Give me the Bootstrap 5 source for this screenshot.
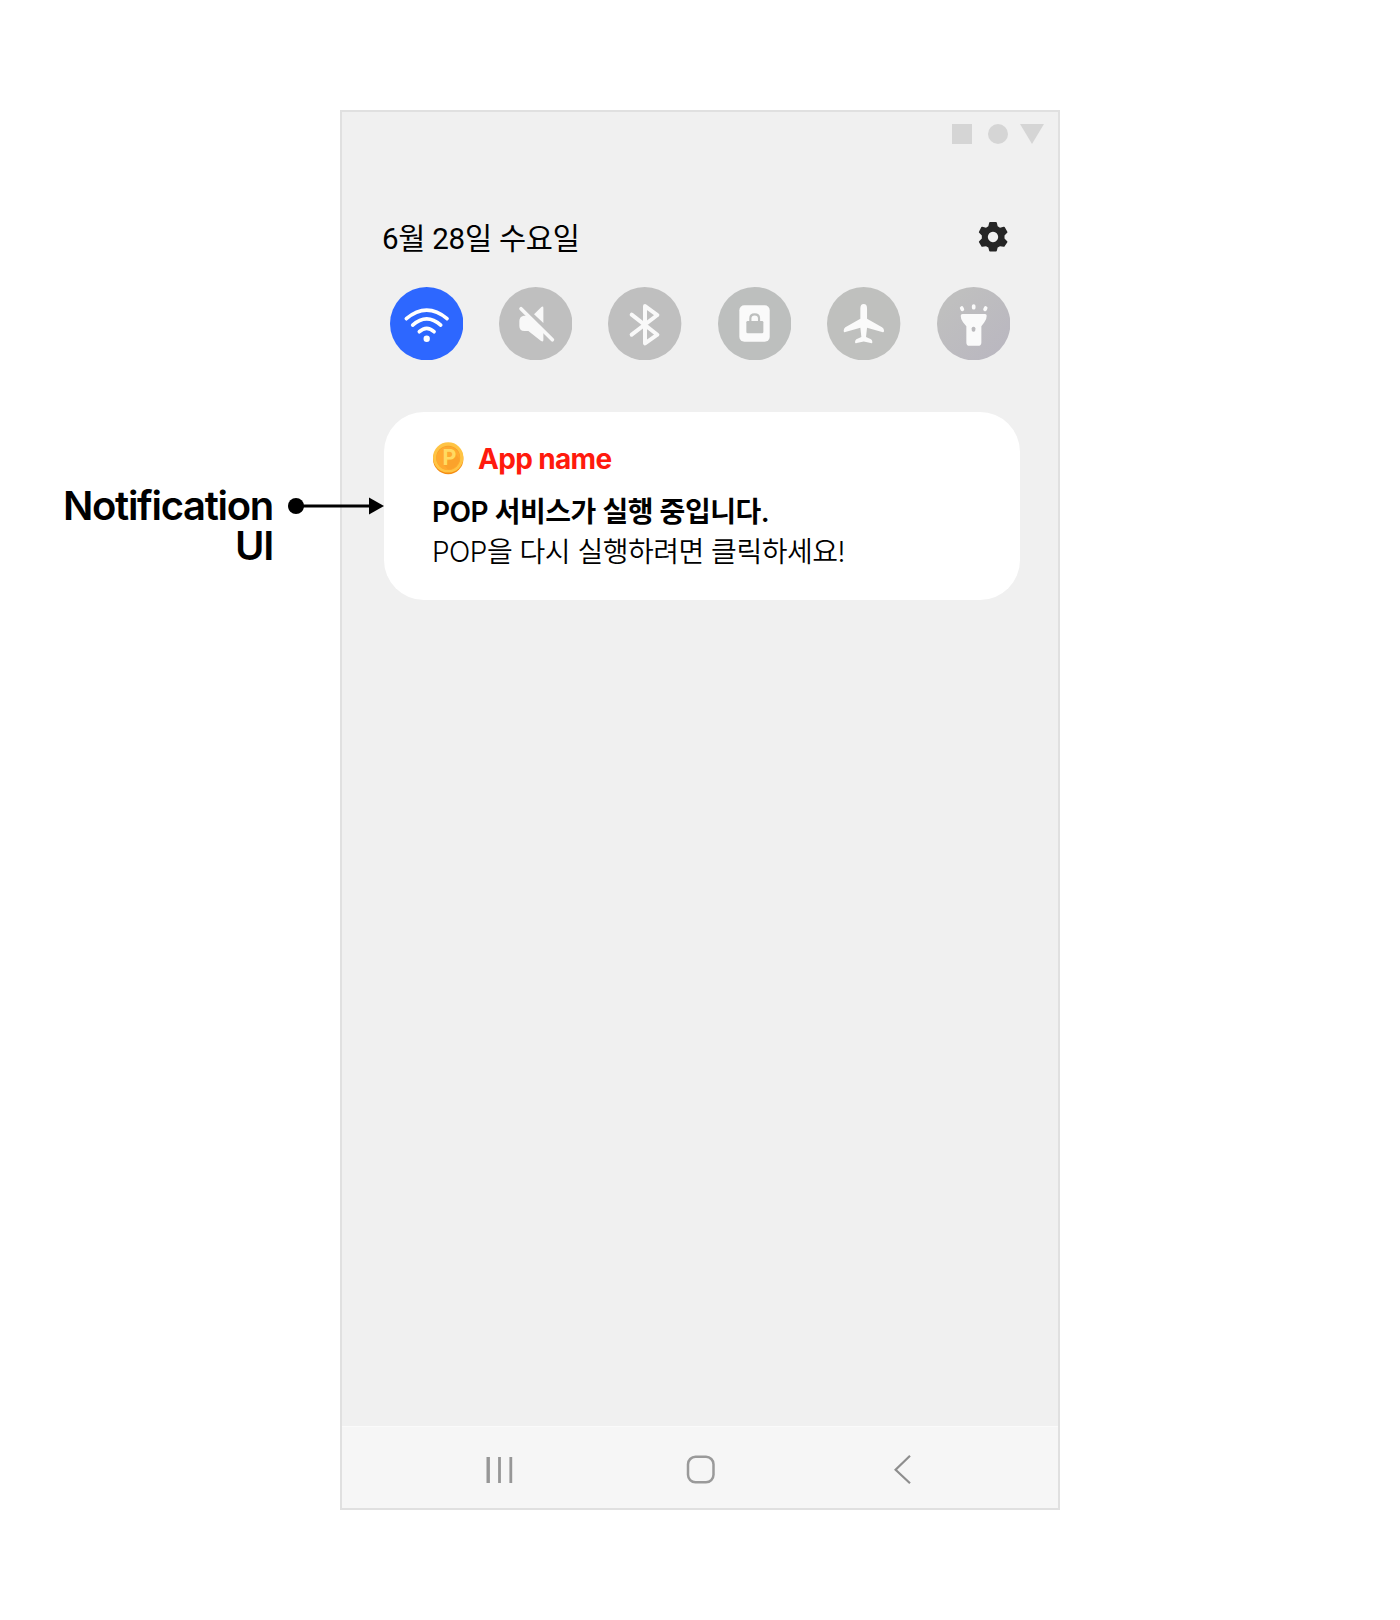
<!DOCTYPE html>
<html lang="ko">
<head>
<meta charset="utf-8">
<meta name="viewport" content="width=device-width, initial-scale=1">
<title>Notification UI</title>
<link href="https://cdn.jsdelivr.net/npm/bootstrap@5.3.0/dist/css/bootstrap.min.css" rel="stylesheet">
<style>
  body { background: #fff; color: #000; font-family: Inter, "Noto Sans CJK KR", sans-serif; }
  svg { display: block; flex: none; }
  .stage { width: 1400px; height: 1620px; padding-top: 110px; }
  .callout { width: 340px; padding: 376px 67px 0 0; }
  .callout-text { font-size: 40px; line-height: 40px; font-weight: 600; letter-spacing: -1.3px; }
  .callout-arrow { left: 288px; top: 496px; z-index: 2; }
  .phone { width: 720px; height: 1400px; background: #f0f0f0; border: 2px solid #e0e0e0; }
  .status-icons { padding: 12px 14px 0 0; height: 32px; }
  .date-row { margin-top: 71px; padding: 0 50px 0 40px; height: 44px; }
  .date-text { font: 400 29.5px/44px Roboto, "Noto Sans CJK KR", sans-serif; letter-spacing: -.25px; white-space: nowrap; padding-top: 3px; }
  .toggles { margin-top: 27.500px; padding: 0 48px 0 47.500px; }
  .notice { margin: 52px 38px 0 42px; height: 188px; border-radius: 40px; padding: 28px 48px 0; }
  .coin { margin-left: 1px; }
  .app-title { font-size: 28px; line-height: 36px; font-weight: 700; color: #ff1a0d; letter-spacing: -.65px; margin-left: 14px; padding-top: 1px; }
  .notice-text { font-size: 28px; line-height: 40px; white-space: nowrap; margin-top: 15px; }
  .line-strong { font-weight: 600; letter-spacing: -.48px; }
  .line-plain { font-weight: 350; letter-spacing: -.5px; }
  .softkeys { height: 82px; background: #f6f6f6; border-top: 1px solid #fafafa; padding: 28px 146px 0 143px; }
</style>
</head>
<body>
<div class="stage d-flex position-relative">
  <div class="callout text-end">
    <div class="callout-text">Notification<br>UI</div>
  </div>
  <svg class="callout-arrow position-absolute" width="96" height="20" viewBox="0 0 96 20">
    <circle cx="8" cy="10" r="8"/><path d="M8 10H84" stroke="#000" stroke-width="3"/><path d="M81 1.5 96 10 81 18.5z"/>
  </svg>

  <main class="phone d-flex flex-column">
    <div class="status-icons d-flex justify-content-end">
      <svg width="92" height="20" viewBox="0 0 92 20" fill="#d5d5d5"><path d="M0 0h20v20H0z"/><circle cx="46" cy="10" r="10"/><path d="M68 0h24L80 20z"/></svg>
    </div>
    <div class="date-row d-flex justify-content-between align-items-center">
      <div class="date-text">6월 28일 수요일</div>
      <svg width="30" height="32" viewBox="144 363 90 96">
        <path fill="#252525" fill-rule="evenodd" d="M180 366h18q2 0 2.500 2l2.500 11 7 4 11-3q2-.5 3 1l8 14q1 2-.5 3.500l-8 8v9l8 8q1.500 1.500.5 3.500l-8 12q-1 2-3 1.500l-11-2-7 4-2.500 10q-.5 2-2.500 2h-18q-2 0-2.500-2l-2.500-10-7-4-11 2q-2 .5-3-1.500l-7-12q-1-2 .5-3.500l8-8v-9l-8-8q-1.500-1.500-.5-3.500l7-14q1-1.500 3-1l11 3 7-4 2.500-11q.5-2 2.500-2zM189 395.500a15.500 15.500 0 1 0 .01 0z"/>
      </svg>
    </div>

    <div class="toggles d-flex justify-content-between">
      <svg width="73.4" height="73.4" viewBox="28 35 220 220">
        <circle cx="138" cy="145" r="110" fill="#2d67ff"/>
        <g fill="none" stroke="#fff" stroke-width="11" stroke-linecap="round"><path d="M77 130q61-51 122 0M96 149q42-37 84 0M116 169q22-20 44 0"/></g><circle cx="138" cy="190" r="9.500" fill="#fff"/>
      </svg>
      <svg width="73.4" height="73.4" viewBox="356 35 220 220">
        <circle cx="466" cy="145" r="110" fill="#bfbfbf"/>
        <g fill="#f8f8f8"><path d="M461 117l22-22q6-4 6 3v45zM430 121q-13 3-13 16v15q0 15 15 15h12l38 30q7 4 7-3v-24l-49-49z"/><path d="M422 100 516 193" fill="none" stroke="#f8f8f8" stroke-width="11" stroke-linecap="round"/></g>
      </svg>
      <svg width="73.4" height="73.4" viewBox="55 35 220 220">
        <circle cx="165" cy="145" r="110" fill="#bfbfbf"/>
        <path d="M126 118l77 60-37 26V92l37 27-77 59" fill="none" stroke="#f9f9f9" stroke-width="12" stroke-linecap="round" stroke-linejoin="round"/>
      </svg>
      <svg width="73.4" height="73.4" viewBox="383 35 220 220">
        <circle cx="493" cy="145" r="110" fill="#bdbfbe"/>
        <rect x="447" y="90" width="91" height="109" rx="15" fill="#fafafa"/><rect x="468" y="137" width="51" height="37" rx="4" fill="#bdbfbe"/><path d="M480 139v-10q0-12 13-12t13 12v10" fill="none" stroke="#bdbfbe" stroke-width="6.500"/>
      </svg>
      <svg width="73.4" height="73.4" viewBox="51 35 220 220">
        <circle cx="161" cy="145" r="110" fill="#bfc0be"/>
        <path fill="#fafafa" d="M161 86q10 0 10 13v31l45 26q6 4 6 10 0 6-6 4l-45-13-3 28 15 7q4 3 4 8 0 5-5 3l-21-5-21 5q-5 2-5-3 0-5 4-8l15-7-3-28-45 13q-5 2-5-4 0-6 5-10l45-26V99q0-13 10-13z"/>
      </svg>
      <svg width="73.4" height="73.4" viewBox="380 35 220 220">
        <defs><linearGradient id="torch" x1="0" y1="0" x2="1" y2="1"><stop offset=".2" stop-color="#bfbfbf"/><stop offset="1" stop-color="#b9b6c0"/></linearGradient></defs>
        <circle cx="490" cy="145" r="110" fill="url(#torch)"/>
        <path fill="#fafafa" d="M457 116h67q5 0 5 5 0 11-7 20l-9 12v48q0 10-10 10h-26q-9 0-9-10v-48l-10-12q-7-9-7-20 0-5 6-5z"/><rect x="484" y="154" width="11" height="15" rx="5" fill="#bbbabd"/>
        <path d="M454 98l2 4M490 92v5M526 98l-2 4" stroke="#fafafa" stroke-width="11" stroke-linecap="round"/>
      </svg>
    </div>

    <section class="notice bg-white">
      <div class="d-flex align-items-center">
        <svg class="coin" width="31" height="33" viewBox="0 0 31 33">
          <circle cx="15.200" cy="17" r="15.200" fill="#f58d12"/><circle cx="15.200" cy="15.400" r="15.200" fill="#ffc444"/><circle cx="15.200" cy="15.800" r="12" fill="#f3a027"/><circle cx="15.200" cy="16.300" r="11.800" fill="#ffa92f"/>
          <path d="M11 23l4 4.500c6 0 11-4.500 11.500-11l-4.500-5z" fill="#fba22b"/>
          <text x="9.600" y="23" font-family="Inter, sans-serif" font-weight="700" font-size="21.500" fill="#ffda62">P</text>
        </svg>
        <div class="app-title">App name</div>
      </div>
      <div class="notice-text">
        <div class="line-strong">POP 서비스가 실행 중입니다.</div>
        <div class="line-plain">POP을 다시 실행하려면 클릭하세요!</div>
      </div>
    </section>

    <nav class="softkeys d-flex justify-content-between mt-auto">
      <svg width="30" height="32" viewBox="0 0 30 32" stroke="#979797"><path d="M3.200 2v26" stroke-width="3.400"/><path d="M14.500 2v26M25.800 2v26" stroke-width="2.800"/></svg>
      <svg width="36" height="32" viewBox="0 0 36 32" fill="none" stroke="#9a9a9a" stroke-width="2.500"><rect x="2" y="1.800" width="25.500" height="25.500" rx="7.500"/></svg>
      <svg width="20" height="32" viewBox="0 0 20 32" fill="none" stroke="#8e8e8e" stroke-width="2.200"><path d="M18 .8 3.600 14.800 18 28.300"/></svg>
    </nav>
  </main>
</div>
<script src="https://cdn.jsdelivr.net/npm/bootstrap@5.3.0/dist/js/bootstrap.bundle.min.js"></script>
</body>
</html>
